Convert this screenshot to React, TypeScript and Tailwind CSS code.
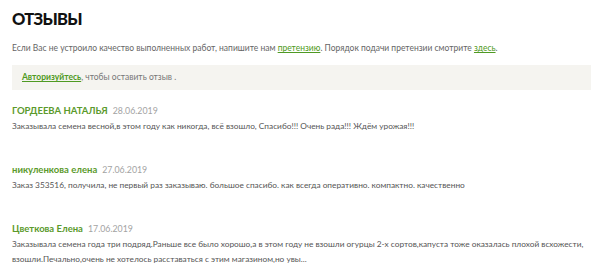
const reviews = [
  {
    name: "ГОРДЕЕВА НАТАЛЬЯ",
    date: "28.06.2019",
    lines: ["Заказывала семена весной,в этом году как никогда, всё взошло, Спасибо!!! Очень рада!!! Ждём урожая!!!"],
  },
  {
    name: "никуленкова елена",
    date: "27.06.2019",
    lines: ["Заказ 353516, получила, не первый раз заказываю. большое спасибо. как всегда оперативно. компактно. качественно"],
  },
  {
    name: "Цветкова Елена",
    date: "17.06.2019",
    lines: [
      "Заказывала семена года три подряд.Раньше все было хорошо,а в этом году не взошли огурцы 2-х сортов,капуста тоже оказалась плохой всхожести,",
      "взошли.Печально,очень не хотелось расставаться с этим магазином,но увы...",
    ],
  },
];

function Review({ name, date, lines }: { name: string; date: string; lines: string[] }) {
  return (
    <div className="pl-3">
      <div className="flex items-baseline gap-[5px] leading-[15px]">
        <span className="text-[9.5px] font-bold text-[#5b9a2c]">{name}</span>
        <span className="text-[8.8px] text-[#a3a3a3]">{date}</span>
      </div>
      <p className="mt-[1px] whitespace-nowrap text-[8.3px] leading-[15px] text-[#555]">
        {lines.map((l, i) => (
          <span key={i} className="block">
            {l}
          </span>
        ))}
      </p>
    </div>
  );
}

export default function App() {
  return (
    <div className="h-[269px] w-[591px] overflow-hidden bg-white font-['Lato',sans-serif]">
      <h1 className="pl-3 pt-[7px] text-[16.5px] font-black leading-[24px] tracking-[-0.7px] text-[#111]">ОТЗЫВЫ</h1>
      <p className="mt-[10px] pl-3 text-[8.5px] leading-[14px] text-[#666]">
        Если Вас не устроило качество выполненных работ, напишите нам{" "}
        <a className="text-[#4f9a23] underline">претензию</a>. Порядок подачи претензии смотрите{" "}
        <a className="text-[#4f9a23] underline">здесь</a>.
      </p>
      <div className="ml-3 mt-[10px] flex h-[25px] items-center bg-[#f5f4f0] px-[10px] text-[8.5px] text-[#777]">
        <a className="font-bold text-[#4f9a23] underline">Авторизуйтесь</a>
        <span>, чтобы оставить отзыв .</span>
      </div>
      <div className="mt-[13px] flex flex-col gap-[28px]">
        {reviews.map((r) => (
          <Review key={r.date} {...r} />
        ))}
      </div>
    </div>
  );
}
